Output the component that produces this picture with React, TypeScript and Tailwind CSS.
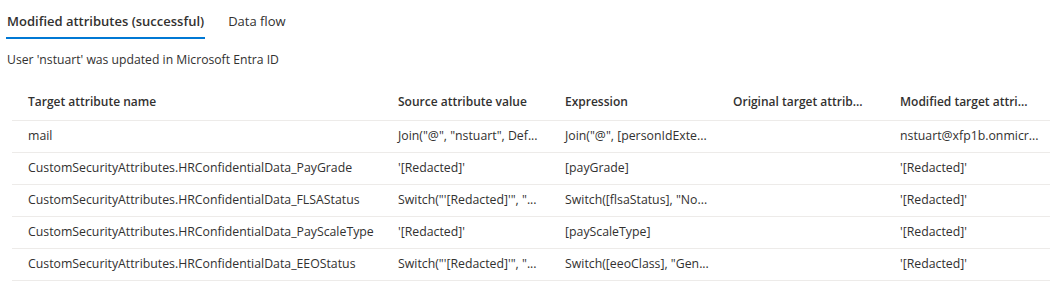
import React from "react";

const rows: string[][] = [
  ["mail", 'Join("@", "nstuart", Def...', 'Join("@", [personIdExte...', "", "nstuart@xfp1b.onmicr..."],
  ["CustomSecurityAttributes.HRConfidentialData_PayGrade", "'[Redacted]'", "[payGrade]", "", "'[Redacted]'"],
  ["CustomSecurityAttributes.HRConfidentialData_FLSAStatus", 'Switch("\'[Redacted]\'", "...', 'Switch([flsaStatus], "No...', "", "'[Redacted]'"],
  ["CustomSecurityAttributes.HRConfidentialData_PayScaleType", "'[Redacted]'", "[payScaleType]", "", "'[Redacted]'"],
  ["CustomSecurityAttributes.HRConfidentialData_EEOStatus", 'Switch("\'[Redacted]\'", "...', 'Switch([eeoClass], "Gen...', "", "'[Redacted]'"],
];

const headers = [
  "Target attribute name",
  "Source attribute value",
  "Expression",
  "Original target attrib...",
  "Modified target attri...",
];

const widths = ["w-[370px]", "w-[167px]", "w-[168px]", "w-[167px]", "flex-1"];

export default function App() {
  return (
    <div className="w-[1050px] h-[300px] overflow-hidden bg-white text-[#323130] font-['Open_Sans',sans-serif]">
      <div className="flex pl-[6px]">
        <div className="mt-[7px] h-[32px] px-[1px] border-b-2 border-[#0078d4] flex items-center text-[13px] font-semibold">
          Modified attributes (successful)
        </div>
        <div className="mt-[7px] h-[32px] ml-[23px] border-b-2 border-transparent flex items-center text-[13px]">
          Data flow
        </div>
      </div>
      <div className="pl-[7px] mt-[11px] h-[20px] flex items-center text-[12.2px]">
        User 'nstuart' was updated in Microsoft Entra ID
      </div>
      <div className="ml-[12px] mt-[14px]">
        <div className="flex h-[37px] border-b border-[#edebe9] items-center text-[12px] font-semibold">
          {headers.map((h, i) => (
            <div key={i} className={`${widths[i]} pl-[16px] whitespace-nowrap overflow-hidden`}>
              {h}
            </div>
          ))}
        </div>
        {rows.map((r, ri) => (
          <div key={ri} className="flex h-[32px] border-b border-[#edebe9] items-center text-[12.3px]">
            {r.map((c, i) => (
              <div key={i} className={`${widths[i]} pl-[16px] whitespace-nowrap overflow-hidden`}>
                {c}
              </div>
            ))}
          </div>
        ))}
      </div>
    </div>
  );
}
